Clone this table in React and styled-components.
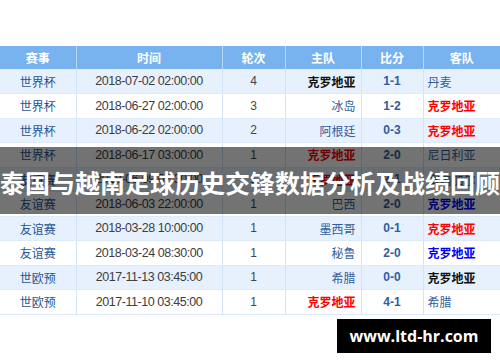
import React from 'react';
import styled, { createGlobalStyle } from 'styled-components';

const Global = createGlobalStyle`
  html, body { margin: 0; padding: 0; background: #fff; }
  body { font-family: "Liberation Sans", "Noto Sans CJK SC", sans-serif; }
`

const Page = styled.div`
  position: relative;
  width: 500px;
  height: 362px;
  overflow: hidden;
  background: #fff;
  padding-top: 46px;
  box-sizing: border-box;
`

const Table = styled.table`
  width: 500px;
  border-collapse: collapse;
  table-layout: fixed;
  font-size: 12px;
`

const Th = styled.th`
  height: 23px;
  padding: 0;
  background: #79b3ef;
  color: #fff;
  font-weight: bold;
  font-family: "Noto Sans CJK SC", sans-serif;
  font-size: 12px;
  border-left: 1px solid #b9d6f6;
  &:first-child { border-left: none; }
`

const Row = styled.tr`
  height: 24.5px;
  background: ${p => (p.$odd ? '#e7f1fd' : '#ffffff')};
`

const Td = styled.td`
  padding: 0 ${p => p.$pad || 0}px;
  text-align: ${p => p.$align || 'center'};
  border-left: 1px solid #d3e3f6;
  border-bottom: 1px solid #dfeaf8;
  white-space: nowrap;
  overflow: hidden;
  &:first-child { border-left: none; }
`

const Cup = styled.span`
  color: #1e5596;
  font-family: "Noto Sans CJK SC", sans-serif;
`

const Time = styled.span`
  color: #3d3d3d;
  font-size: 12.5px;
  letter-spacing: -0.45px;
`

const Round = styled.span`
  color: #444;
`

const Team = styled.span`
  font-family: "Noto Sans CJK SC", sans-serif;
  color: ${p => p.$color || '#2f5f9f'};
  font-weight: ${p => (p.$color ? 'bold' : 'normal')};
`

const Score = styled.span`
  color: #2e5e9e;
  font-weight: bold;
`

const Band = styled.div`
  position: absolute;
  left: 0;
  top: 147px;
  width: 500px;
  height: 67px;
  background: rgba(0, 0, 0, 0.55);
  display: flex;
  align-items: center;
  justify-content: center;
`

const Title = styled.div`
  color: #fff;
  font-family: "Noto Sans CJK SC", sans-serif;
  font-weight: bold;
  font-size: 25px;
  line-height: 1;
  white-space: nowrap;
  margin-top: 4px;
`

const Mark = styled.div`
  position: absolute;
  left: 337px;
  top: 319px;
  width: 154px;
  height: 34px;
  background: #000;
  color: #fff;
  display: flex;
  align-items: center;
  justify-content: center;
  font-family: "Open Sans", sans-serif;
  font-weight: bold;
  font-size: 16px;
`

const HL = { win: '#ff0000', lose: '#0000ff', draw: '#111111' }

const rows = [
  ['世界杯', '2018-07-02 02:00:00', 4, ['克罗地亚', 'draw'], '1-1', ['丹麦']],
  ['世界杯', '2018-06-27 02:00:00', 3, ['冰岛'], '1-2', ['克罗地亚', 'win']],
  ['世界杯', '2018-06-22 02:00:00', 2, ['阿根廷'], '0-3', ['克罗地亚', 'win']],
  ['世界杯', '2018-06-17 03:00:00', 1, ['克罗地亚', 'win'], '2-0', ['尼日利亚']],
  ['友谊赛', '2018-06-09 02:30:00', 1, ['克罗地亚', 'win'], '2-1', ['塞内加尔']],
  ['友谊赛', '2018-06-03 22:00:00', 1, ['巴西'], '2-0', ['克罗地亚', 'lose']],
  ['友谊赛', '2018-03-28 10:00:00', 1, ['墨西哥'], '0-1', ['克罗地亚', 'win']],
  ['友谊赛', '2018-03-24 08:30:00', 1, ['秘鲁'], '2-0', ['克罗地亚', 'lose']],
  ['世欧预', '2017-11-13 03:45:00', 1, ['希腊'], '0-0', ['克罗地亚', 'draw']],
  ['世欧预', '2017-11-10 03:45:00', 1, ['克罗地亚', 'win'], '4-1', ['希腊']],
]

function App() {
  return (
    <Page>
      <Global />
      <Table>
        <colgroup>
          <col style={{ width: 76 }} />
          <col style={{ width: 146 }} />
          <col style={{ width: 63 }} />
          <col style={{ width: 76 }} />
          <col style={{ width: 62 }} />
          <col style={{ width: 77 }} />
        </colgroup>
        <thead>
          <tr>
            <Th>赛事</Th>
            <Th>时间</Th>
            <Th>轮次</Th>
            <Th>主队</Th>
            <Th>比分</Th>
            <Th>客队</Th>
          </tr>
        </thead>
        <tbody>
          {rows.map((r, i) => (
            <Row key={i} $odd={i % 2 === 0}>
              <Td><Cup>{r[0]}</Cup></Td>
              <Td><Time>{r[1]}</Time></Td>
              <Td><Round>{r[2]}</Round></Td>
              <Td $align="right" $pad={5}><Team $color={HL[r[3][1]]}>{r[3][0]}</Team></Td>
              <Td><Score>{r[4]}</Score></Td>
              <Td $align="left" $pad={4}><Team $color={HL[r[5][1]]}>{r[5][0]}</Team></Td>
            </Row>
          ))}
        </tbody>
      </Table>
      <Band>
        <Title>泰国与越南足球历史交锋数据分析及战绩回顾</Title>
      </Band>
      <Mark>www.ltd-hr.com</Mark>
    </Page>
  )
}

export default App
